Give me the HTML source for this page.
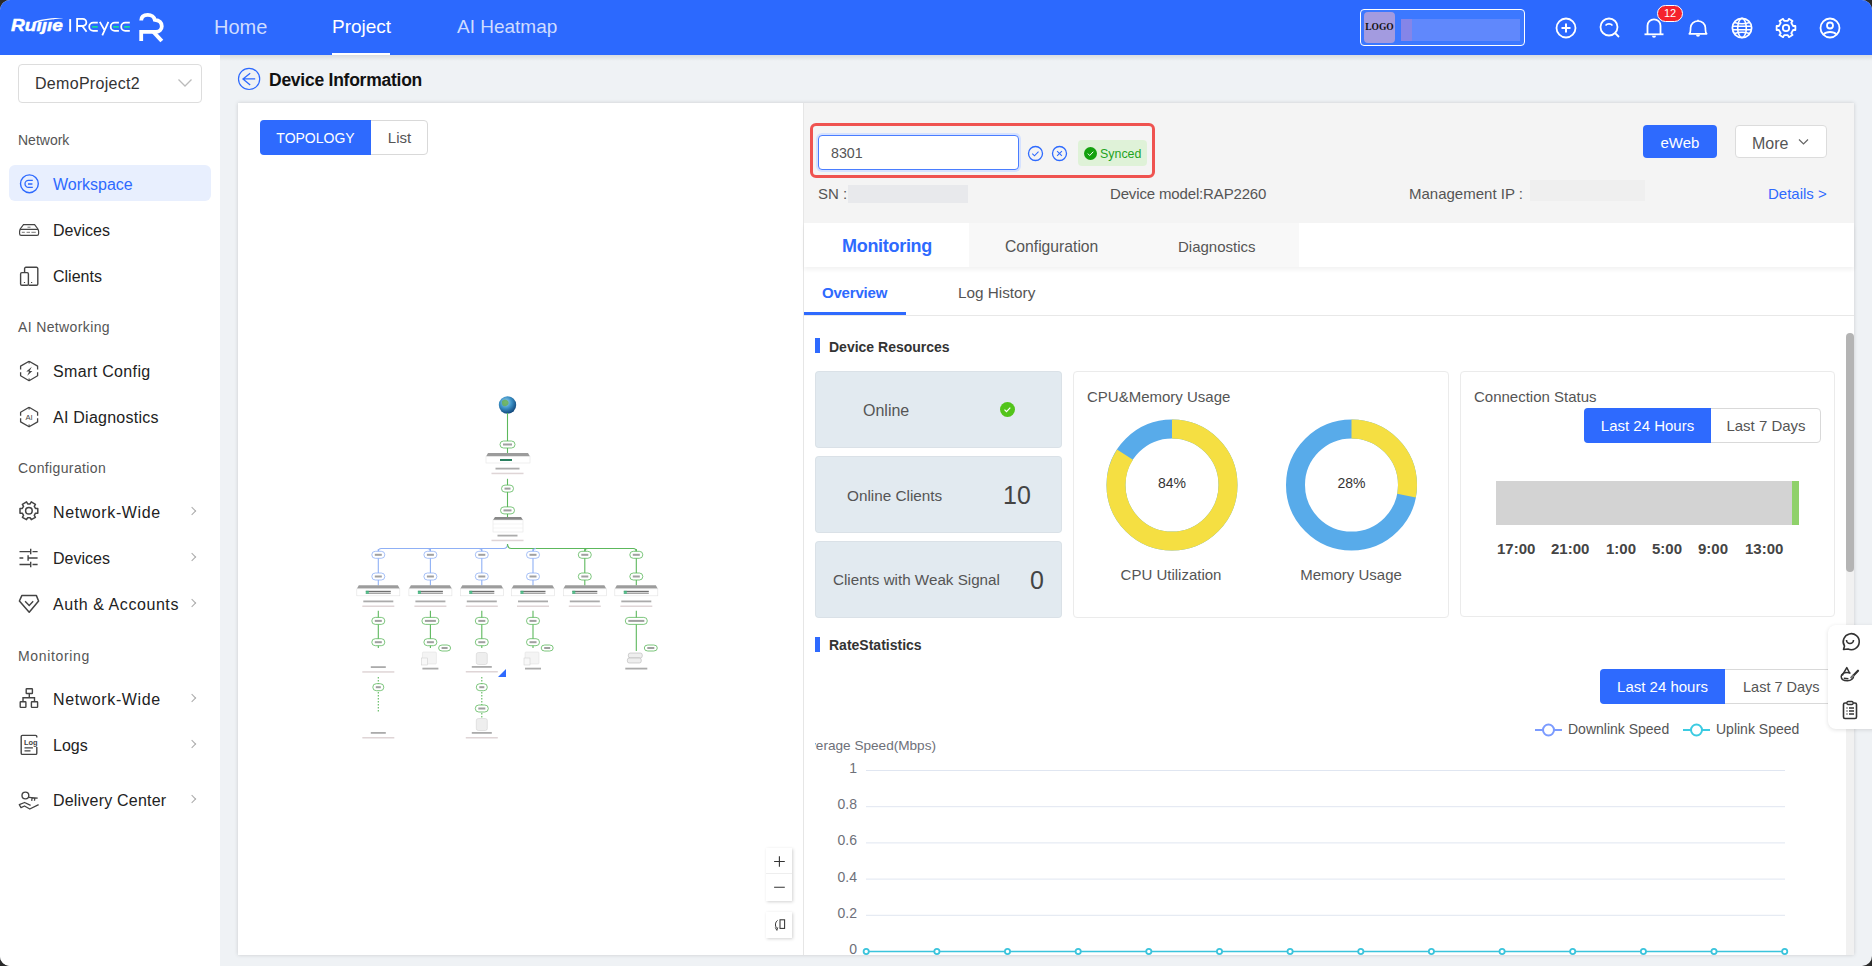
<!DOCTYPE html>
<html><head><meta charset="utf-8">
<style>
*{box-sizing:border-box;margin:0;padding:0}
html,body{width:1872px;height:966px;overflow:hidden;background:#2a2a2a}
body{font-family:"Liberation Sans",sans-serif;color:#333}
#win{position:absolute;left:0;top:0;width:1872px;height:966px;background:#eff2f5;border-radius:10px;overflow:hidden}
.a{position:absolute;white-space:nowrap}
svg.a{overflow:visible}
#hdr{position:absolute;left:0;top:0;width:1872px;height:55px;background:#2c69fe;z-index:2}
#side{position:absolute;left:0;top:55px;width:220px;height:911px;background:#fff}
.nav{color:#fff;font-size:20px;top:15px}
.grp{font-size:14px;color:#555;left:18px}
.item{font-size:16px;color:#222;left:53px}
.chev{position:absolute;left:189px;width:6px;height:6px;border-right:1px solid #aaa;border-top:1px solid #aaa;transform:rotate(45deg)}
.si{position:absolute;left:18px;width:22px;height:22px;overflow:visible}
#card{position:absolute;left:238px;top:103px;width:1616px;height:852px;background:#fff;box-shadow:0 0 4px rgba(0,0,0,.16)}
.hi{position:absolute;top:17px;width:22px;height:22px;overflow:visible}
</style></head>
<body><div id="win">
<!-- HEADER -->
<div id="hdr">
  <svg class="a" style="left:0;top:0" width="180" height="55" viewBox="0 0 180 55">
    <text x="11" y="31" font-family="Liberation Sans" font-size="17" font-weight="bold" font-style="italic" fill="#fff" stroke="#fff" stroke-width=".45" textLength="52" lengthAdjust="spacingAndGlyphs">Ruijie</text>
    <rect x="31" y="14" width="22" height="7.6" fill="#2c69fe"/><path d="M33 22.4C40 19.2 52 17.6 63.5 18.2C53 18.9 42 20.5 35 23z" fill="#fff"/>
    <rect x="69.2" y="19.1" width="1.9" height="12.7" fill="#fff"/>
    <path d="M77.1 31.8V18.9H82.8A3.55 3.55 0 0 1 82.8 26H77.1M82.3 26L86.6 31.8" stroke="#fff" stroke-width="1.8" fill="none"/><path d="M97.8 22.7H93.30A4.10 4.10 0 0 0 93.30 30.9H97.8" stroke="#fff" stroke-width="1.8" fill="none"/><path d="M92.2 26.8H97.8" stroke="#14d99b" stroke-width="1.8"/><path d="M99.8 21.9L104.2 29.6M108.4 21.9L102.3 35.3" stroke="#fff" stroke-width="1.8" fill="none"/><path d="M118.9 22.7H114.80A4.10 4.10 0 0 0 114.80 30.9H118.9" stroke="#fff" stroke-width="1.8" fill="none"/><path d="M113.2 26.8H118.9" stroke="#14d99b" stroke-width="1.8"/><path d="M129.8 22.7H125.30A4.10 4.10 0 0 0 125.30 30.9H129.8" stroke="#fff" stroke-width="1.8" fill="none"/><path d="M124.2 26.8H129.8" stroke="#14d99b" stroke-width="1.8"/>
    <path d="M141.2 20.5C141.2 16 144.5 14.8 147.8 14.8C151.5 14.8 154.2 17 154.8 19.8C159.5 20.2 161.8 23 161.8 26.2C161.8 29.8 159 31.8 156 31.8H141.2V41" fill="none" stroke="#fff" stroke-width="3.8"/><path d="M153.5 32L161.8 41" stroke="#fff" stroke-width="4"/>
  </svg>
  <div class="a nav" style="left:214px;top:16px;color:#cfdcff">Home</div>
  <div class="a nav" style="left:332px;top:16px;font-size:19px">Project</div>
  <div class="a" style="left:332px;top:53px;width:58px;height:2px;background:#fff"></div>
  <div class="a nav" style="left:457px;top:16px;font-size:19px;color:#cfdcff">AI Heatmap</div>
  <!-- logo box -->
  <div class="a" style="left:1360px;top:9px;width:165px;height:37px;border:1.5px solid #fff;border-radius:4px;background:#3c78ff"></div>
  <div class="a" style="left:1364px;top:12px;width:31px;height:31px;background:#a39be0;border-radius:4px;font-family:'Liberation Serif',serif;font-weight:bold;font-size:9.5px;color:#111;text-align:center;line-height:31px">LOGO</div>
  <div class="a" style="left:1401px;top:19px;width:119px;height:22px;background:#6088fc"></div>
  <div class="a" style="left:1401px;top:19px;width:11px;height:22px;background:#8585e8"></div>
  <!-- icons -->
  <svg class="hi" style="left:1555px" viewBox="0 0 22 22"><circle cx="11" cy="11" r="9.5" fill="none" stroke="#fff" stroke-width="1.8"/><path d="M11 6.5v9M6.5 11h9" stroke="#fff" stroke-width="2"/></svg>
  <svg class="hi" style="left:1599px" viewBox="0 0 22 22"><circle cx="10" cy="10" r="8.5" fill="none" stroke="#fff" stroke-width="1.8"/><path d="M16 16l4 4" stroke="#fff" stroke-width="1.8"/><path d="M6.5 8.5a4.5 4.5 0 0 1 7 0" fill="none" stroke="#fff" stroke-width="1.6"/></svg>
  <svg class="hi" style="left:1643px" viewBox="0 0 22 22"><path d="M4.5 17V8.8a6.5 6.5 0 0 1 13 0V17" fill="none" stroke="#fff" stroke-width="1.8"/><path d="M1.5 17.3h19" stroke="#fff" stroke-width="1.8"/><path d="M9 18.8a2 2 0 0 0 4 0" fill="#fff"/></svg>
  <svg class="hi" style="left:1687px" viewBox="0 0 22 22"><path d="M2.3 16.8C3.8 15.5 3.5 13.5 3.6 10.8C3.8 6.8 7 4 11 4S18.2 6.8 18.4 10.8C18.5 13.5 18.2 15.5 19.7 16.8z" fill="none" stroke="#fff" stroke-width="1.7" stroke-linejoin="round"/><path d="M9.7 4.2L11 2.3L12.3 4.2z" fill="#fff"/><path d="M9 17.8a2 2 0 0 0 4 0" fill="#fff"/></svg>
  <svg class="hi" style="left:1731px" viewBox="0 0 22 22"><circle cx="11" cy="11" r="9.6" fill="none" stroke="#fff" stroke-width="1.8"/><ellipse cx="11" cy="11" rx="4.3" ry="9.6" fill="none" stroke="#fff" stroke-width="1.6"/><path d="M1.5 9.2h19M1.5 12.8h19M3.5 5.5q7.5 2.5 15 0M3.5 16.5q7.5-2.5 15 0" fill="none" stroke="#fff" stroke-width="1.5"/></svg>
  <svg class="hi" style="left:1775px" viewBox="0 0 22 22"><path d="M18.12 8.99L20.37 8.91L20.37 13.09L18.12 13.01L16.30 16.16L17.50 18.07L13.87 20.16L12.82 18.17L9.18 18.17L8.13 20.160L4.50 18.07L5.70 16.16L3.88 13.01L1.63 13.09L1.63 8.91L3.88 8.99L5.70 5.84L4.50 3.93L8.13 1.84L9.18 3.83L12.82 3.83L13.87 1.84L17.50 3.93L16.30 5.84z" fill="none" stroke="#fff" stroke-width="1.8" stroke-linejoin="round"/><circle cx="11" cy="11" r="3.2" fill="none" stroke="#fff" stroke-width="1.8"/></svg>
  <svg class="hi" style="left:1819px" viewBox="0 0 22 22"><circle cx="11" cy="11" r="9.5" fill="none" stroke="#fff" stroke-width="1.8"/><circle cx="11" cy="8.5" r="3" fill="none" stroke="#fff" stroke-width="1.8"/><path d="M4.5 17.5a7.5 5 0 0 1 13 0" fill="none" stroke="#fff" stroke-width="1.8"/></svg>
  <div class="a" style="left:1657px;top:5px;width:26px;height:17px;background:#f5222d;border-radius:9px;border:1px solid #fff;color:#fff;font-size:11px;text-align:center;line-height:15px">12</div>
</div>
<!-- SIDEBAR -->
<div id="side">
  <div class="a" style="left:18px;top:9px;width:184px;height:39px;border:1px solid #ddd;border-radius:4px"></div>
  <div class="a" style="left:35px;top:20px;font-size:16px;color:#333;letter-spacing:.3px">DemoProject2</div>
  <svg class="a" style="left:176px;top:22px" width="18" height="12"><path d="M2.5 2.5L9 9L15.5 2.5" fill="none" stroke="#bbb" stroke-width="1.3"/></svg>
  <div class="grp a" style="top:77px">Network</div>
  <div class="a" style="left:9px;top:110px;width:202px;height:36px;background:#e8effe;border-radius:6px"></div>
  <div class="item a" style="top:121px;color:#2e6afe">Workspace</div>
  <div class="item a" style="top:167px">Devices</div>
  <div class="item a" style="top:213px">Clients</div>
  <div class="grp a" style="top:264px;letter-spacing:.37px">AI Networking</div>
  <div class="item a" style="top:308px;letter-spacing:.35px">Smart Config</div>
  <div class="item a" style="top:354px;letter-spacing:.25px">AI Diagnostics</div>
  <div class="grp a" style="top:405px;letter-spacing:.37px">Configuration</div>
  <div class="item a" style="top:449px;letter-spacing:.6px">Network-Wide</div>
  <div class="item a" style="top:495px">Devices</div>
  <div class="item a" style="top:541px;letter-spacing:.57px">Auth &amp; Accounts</div>
  <div class="grp a" style="top:593px;letter-spacing:.65px">Monitoring</div>
  <div class="item a" style="top:636px;letter-spacing:.6px">Network-Wide</div>
  <div class="item a" style="top:682px">Logs</div>
  <div class="item a" style="top:737px;letter-spacing:.2px">Delivery Center</div>
  <div class="chev" style="top:453px"></div>
  <div class="chev" style="top:499px"></div>
  <div class="chev" style="top:545px"></div>
  <div class="chev" style="top:640px"></div>
  <div class="chev" style="top:686px"></div>
  <div class="chev" style="top:741px"></div>
  <!-- icons -->
  <svg class="a" style="left:16px;top:116px" width="26" height="24" viewBox="16 171 26 24"><circle cx="29.4" cy="183.8" r="8.9" fill="none" stroke="#2e6afe" stroke-width="1.4"/><path d="M32.8 180.4H28.5a3.5 3.5 0 0 0 0 7H32.8" fill="none" stroke="#2e6afe" stroke-width="1.3"/><path d="M28 184H32.4" stroke="#2e6afe" stroke-width="1.6"/></svg>
  <svg class="a" style="left:16px;top:162px" width="26" height="24" viewBox="16 217 26 24"><path d="M19.8 229.5L23.5 224.6H34.6L38.3 229.5" fill="none" stroke="#444" stroke-width="1.2"/><rect x="19.6" y="229.3" width="19" height="6" rx="1.6" fill="none" stroke="#444" stroke-width="1.2"/><path d="M21.8 232.3h3M26.6 232.3h3.4M31.4 232.3h4.4M27.5 227.2h3" stroke="#666" stroke-width=".9"/></svg>
  <svg class="a" style="left:16px;top:208px" width="26" height="24" viewBox="16 263 26 24"><path d="M24.6 272.3V268.6a1.3 1.3 0 0 1 1.3-1.3H36.5a1.3 1.3 0 0 1 1.3 1.3V284a1.3 1.3 0 0 1-1.3 1.3H28.6" fill="none" stroke="#444" stroke-width="1.4"/><rect x="20.6" y="272.6" width="7.8" height="12.6" rx="1.3" fill="none" stroke="#444" stroke-width="1.4"/><path d="M23.9 282.5h1.2M31 282.5h1.2" stroke="#444" stroke-width="1.1"/></svg>
  <svg class="a" style="left:16px;top:303px" width="26" height="24" viewBox="16 358 26 24"><path d="M29.1 361.2L37.6 366.1V369.6M37.6 372.2V375.8L29.1 380.7L20.6 375.8V372.2M20.6 369.6V366.1L29.1 361.2" fill="none" stroke="#444" stroke-width="1.3" stroke-linejoin="round"/><path d="M29.1 361.5v2M29.1 380.4v-2" stroke="#444" stroke-width="1.2"/><path d="M31.8 366.8L26.3 371.6H29.2L27.2 375.8L32.4 370.9H29.6z" fill="#444"/></svg>
  <svg class="a" style="left:16px;top:349px" width="26" height="24" viewBox="16 404 26 24"><path d="M29.1 407.3L37.6 412.2V415.7M37.6 418.3V421.9L29.1 426.8L20.6 421.9V418.3M20.6 415.7V412.2L29.1 407.3" fill="none" stroke="#444" stroke-width="1.3" stroke-linejoin="round"/><path d="M29.1 407.6v2M29.1 426.5v-2" stroke="#444" stroke-width="1.2"/><text x="29.1" y="420" font-size="7.6" text-anchor="middle" font-family="Liberation Sans" fill="#444">AI</text></svg>
  <svg class="a" style="left:16px;top:444px" width="26" height="24" viewBox="16 499 26 24"><path d="M35.47 508.38L37.79 508.42L37.79 513.18L35.47 513.22L34.28 515.28L35.41 517.31L31.28 519.69L30.09 517.70L27.71 517.70L26.52 519.69L22.39 517.31L23.52 515.28L22.33 513.22L20.01 513.18L20.01 508.42L22.33 508.38L23.52 506.32L22.39 504.29L26.52 501.91L27.71 503.90L30.09 503.90L31.28 501.91L35.41 504.29L34.28 506.32z" fill="none" stroke="#444" stroke-width="1.5" stroke-linejoin="round"/><circle cx="28.9" cy="510.8" r="3.3" fill="none" stroke="#444" stroke-width="1.5"/></svg>
  <svg class="a" style="left:16px;top:490px" width="26" height="24" viewBox="16 545 26 24"><path d="M19.5 551.6H30M32.5 551.6H37.6M19.5 558H23.3M28 558H37.6M19.5 564.5H30M32.5 564.5H37.6" stroke="#444" stroke-width="1.4"/><path d="M30.7 548.8V554.3M28.1 555.2V560.8M30.7 561.7V567.2" stroke="#444" stroke-width="1.4"/></svg>
  <svg class="a" style="left:16px;top:536px" width="26" height="24" viewBox="16 591 26 24"><path d="M21.8 595.6H36.4L38.6 601L29.2 612.2L19.4 601z" fill="none" stroke="#444" stroke-width="1.5" stroke-linejoin="round"/><path d="M25.1 601.2L29.2 605.4L33.2 601.2" fill="none" stroke="#444" stroke-width="1.4"/></svg>
  <svg class="a" style="left:16px;top:630px" width="26" height="24" viewBox="16 685 26 24"><rect x="26.2" y="688.7" width="6.2" height="4.8" rx=".6" fill="none" stroke="#444" stroke-width="1.4"/><rect x="20.2" y="701.8" width="5.7" height="5.6" rx=".6" fill="none" stroke="#444" stroke-width="1.4"/><rect x="31.4" y="701.8" width="6.2" height="5.6" rx=".6" fill="none" stroke="#444" stroke-width="1.4"/><path d="M29.3 693.5V697.7M23 701.8V697.7H34.5V701.8" fill="none" stroke="#444" stroke-width="1.4"/></svg>
  <svg class="a" style="left:16px;top:677px" width="26" height="24" viewBox="16 732 26 24"><path d="M36.8 737.6V736.6a1.2 1.2 0 0 0-1.2-1.2H22.4a1.2 1.2 0 0 0-1.2 1.2V753.2a1.2 1.2 0 0 0 1.2 1.2H35.6a1.2 1.2 0 0 0 1.2-1.2V747" fill="none" stroke="#444" stroke-width="1.4"/><text x="24" y="745.3" font-size="7.8" font-family="Liberation Sans" font-weight="bold" fill="#444" textLength="13.6" lengthAdjust="spacingAndGlyphs">Log</text><path d="M24.5 747.8H32.9M24.5 750.8H30.5" stroke="#444" stroke-width="1.2"/></svg>
  <svg class="a" style="left:16px;top:733px" width="26" height="24" viewBox="16 788 26 24"><circle cx="25.4" cy="795.5" r="3.4" fill="none" stroke="#444" stroke-width="1.4"/><path d="M28.8 797.3L37.7 798.2M32.1 797.7L31.7 800.8M34.8 797.9L34.5 800.8" fill="none" stroke="#444" stroke-width="1.3"/><path d="M30.6 805.3L24.6 802.5L19.3 804.6L21 807.7L24.5 806L29.8 809L38.6 804.6" fill="none" stroke="#444" stroke-width="1.3" stroke-linejoin="round"/></svg>
</div>
<div class="a" style="left:220px;top:55px;width:1652px;height:6px;background:linear-gradient(rgba(0,0,0,.09),rgba(0,0,0,0))"></div>
<!-- PAGE TITLE -->
<svg class="a" style="left:236px;top:66px" width="26" height="26" viewBox="236 66 26 26"><circle cx="249.1" cy="78.9" r="10.6" fill="none" stroke="#2e6afe" stroke-width="1.2"/><path d="M255.2 78.9H243M250.2 73.2L243 78.9L250.2 84.9" fill="none" stroke="#2e6afe" stroke-width="1.3"/></svg>
<div class="a" style="left:269px;top:70px;font-size:17.5px;font-weight:bold;color:#111;letter-spacing:-.25px">Device Information</div>

<!-- CARD -->
<div id="card"></div>
<div class="a" style="left:803px;top:103px;width:1px;height:852px;background:#e6e6e6"></div>
<!-- topology toggle -->
<div class="a" style="left:260px;top:120px;width:168px;height:35px;border:1px solid #d9d9d9;border-radius:4px;background:#fff"></div>
<div class="a" style="left:260px;top:120px;width:111px;height:35px;background:#2e6afe;border-radius:4px 0 0 4px;color:#fff;font-size:14px;line-height:36px;text-align:center">TOPOLOGY</div>
<div class="a" style="left:371px;top:120px;width:57px;height:35px;color:#555;font-size:15px;line-height:36px;text-align:center">List</div>
<!-- topology -->
<svg class="a" style="left:340px;top:385px" width="340" height="370"><defs><radialGradient id="gl" cx=".4" cy=".35" r=".7"><stop offset="0" stop-color="#9fd6f2"/><stop offset=".5" stop-color="#3a8fc4"/><stop offset="1" stop-color="#0d3f73"/></radialGradient></defs><circle cx="167.5" cy="20" r="8.7" fill="url(#gl)"/><path d="M162 16q3 -3 6 0q2 3 -2 5q-3 1 -4 -2z" fill="#6ab04c" opacity=".8"/><path d="M167.5 28L167.5 68" stroke="#5cb85c" stroke-width="1.1" fill="none"/><rect x="160.0" y="56.0" width="15" height="7" rx="3.5" fill="#fff" stroke="#5cb85c" stroke-width=".8"/><rect x="163.0" y="58.5" width="9" height="2" fill="#777" opacity=".7"/><path d="M148 68H188L190 71.5H146z" fill="#9c9c9c"/><rect x="146" y="71.5" width="44" height="6.5" fill="#fff" stroke="#e5e5e5" stroke-width=".6"/><rect x="160" y="74" width="12" height="2" fill="#2a7f5f"/><rect x="155.5" y="82.7" width="24" height="1.8" fill="#666" opacity=".55"/><rect x="151.5" y="87.7" width="32" height="1.5" fill="#c9b9bb" opacity=".6"/><path d="M167.5 93.8L167.5 132" stroke="#5cb85c" stroke-width="1.1" fill="none"/><rect x="161.5" y="100.1" width="12" height="7" rx="3.5" fill="#fff" stroke="#5cb85c" stroke-width=".8"/><rect x="164.5" y="102.6" width="6" height="2" fill="#777" opacity=".7"/><rect x="160.5" y="121.9" width="14" height="7" rx="3.5" fill="#fff" stroke="#5cb85c" stroke-width=".8"/><rect x="163.5" y="124.4" width="8" height="2" fill="#777" opacity=".7"/><path d="M155 132H181L183 135H153z" fill="#888"/><rect x="153" y="135" width="30" height="12" fill="#fff" stroke="#e5e5e5" stroke-width=".6"/><path d="M153 139h30M153 143h30" stroke="#eee" stroke-width=".6"/><rect x="157.5" y="149.7" width="20" height="1.8" fill="#666" opacity=".55"/><rect x="151.5" y="154.7" width="32" height="1.5" fill="#c9b9bb" opacity=".6"/><path d="M167.5 159q0 4.5 -4 4.5H41.3q-3 0 -3 3" stroke="#8fb0f5" stroke-width="1.1" fill="none"/><path d="M167.5 159q0 4.5 4 4.5H293.3q3 0 3 3" stroke="#5cb85c" stroke-width="1.1" fill="none"/><path d="M38.3 164L38.3 200.4" stroke="#8fb0f5" stroke-width="1.1" fill="none"/><rect x="31.8" y="166.3" width="13" height="7" rx="3.5" fill="#fff" stroke="#8fb0f5" stroke-width=".8"/><rect x="34.8" y="168.8" width="7" height="2" fill="#777" opacity=".7"/><rect x="31.8" y="188.0" width="13" height="7" rx="3.5" fill="#fff" stroke="#8fb0f5" stroke-width=".8"/><rect x="34.8" y="190.5" width="7" height="2" fill="#777" opacity=".7"/><path d="M18.8 200.3H57.8L59.8 203.8H16.8z" fill="#9c9c9c"/><rect x="16.8" y="203.8" width="43" height="7" fill="#fff" stroke="#e2e2e2" stroke-width=".6"/><rect x="25.8" y="205.79999999999998" width="25.0" height="1.2" fill="#333" opacity=".7"/><rect x="25.8" y="207.6" width="25.0" height="1.2" fill="#333" opacity=".55"/><rect x="25.8" y="205.79999999999998" width="3" height="3" fill="#3cbf7f" opacity=".8"/><rect x="23.3" y="215.5" width="30" height="1.8" fill="#666" opacity=".55"/><rect x="22.3" y="220.5" width="32" height="1.5" fill="#c9b9bb" opacity=".6"/><path d="M90.4 166.5q0 -3 -3 -3" stroke="#8fb0f5" stroke-width="1.1" fill="none"/><path d="M90.4 164L90.4 200.4" stroke="#8fb0f5" stroke-width="1.1" fill="none"/><rect x="83.9" y="166.3" width="13" height="7" rx="3.5" fill="#fff" stroke="#8fb0f5" stroke-width=".8"/><rect x="86.9" y="168.8" width="7" height="2" fill="#777" opacity=".7"/><rect x="83.9" y="188.0" width="13" height="7" rx="3.5" fill="#fff" stroke="#8fb0f5" stroke-width=".8"/><rect x="86.9" y="190.5" width="7" height="2" fill="#777" opacity=".7"/><path d="M70.9 200.3H109.9L111.9 203.8H68.9z" fill="#9c9c9c"/><rect x="68.9" y="203.8" width="43" height="7" fill="#fff" stroke="#e2e2e2" stroke-width=".6"/><rect x="77.9" y="205.79999999999998" width="25.0" height="1.2" fill="#333" opacity=".7"/><rect x="77.9" y="207.6" width="25.0" height="1.2" fill="#333" opacity=".55"/><rect x="77.9" y="205.79999999999998" width="3" height="3" fill="#3cbf7f" opacity=".8"/><rect x="75.4" y="215.5" width="30" height="1.8" fill="#666" opacity=".55"/><rect x="74.4" y="220.5" width="32" height="1.5" fill="#c9b9bb" opacity=".6"/><path d="M141.8 166.5q0 -3 -3 -3" stroke="#8fb0f5" stroke-width="1.1" fill="none"/><path d="M141.8 164L141.8 200.4" stroke="#8fb0f5" stroke-width="1.1" fill="none"/><rect x="135.3" y="166.3" width="13" height="7" rx="3.5" fill="#fff" stroke="#8fb0f5" stroke-width=".8"/><rect x="138.3" y="168.8" width="7" height="2" fill="#777" opacity=".7"/><rect x="135.3" y="188.0" width="13" height="7" rx="3.5" fill="#fff" stroke="#8fb0f5" stroke-width=".8"/><rect x="138.3" y="190.5" width="7" height="2" fill="#777" opacity=".7"/><path d="M122.3 200.3H161.3L163.3 203.8H120.3z" fill="#9c9c9c"/><rect x="120.3" y="203.8" width="43" height="7" fill="#fff" stroke="#e2e2e2" stroke-width=".6"/><rect x="129.3" y="205.79999999999998" width="25.0" height="1.2" fill="#333" opacity=".7"/><rect x="129.3" y="207.6" width="25.0" height="1.2" fill="#333" opacity=".55"/><rect x="129.3" y="205.79999999999998" width="3" height="3" fill="#3cbf7f" opacity=".8"/><rect x="126.8" y="215.5" width="30" height="1.8" fill="#666" opacity=".55"/><rect x="125.8" y="220.5" width="32" height="1.5" fill="#c9b9bb" opacity=".6"/><path d="M193 166.5q0 -3 3 -3" stroke="#8fb0f5" stroke-width="1.1" fill="none"/><path d="M193 164L193 200.4" stroke="#8fb0f5" stroke-width="1.1" fill="none"/><rect x="186.5" y="166.3" width="13" height="7" rx="3.5" fill="#fff" stroke="#8fb0f5" stroke-width=".8"/><rect x="189.5" y="168.8" width="7" height="2" fill="#777" opacity=".7"/><rect x="186.5" y="188.0" width="13" height="7" rx="3.5" fill="#fff" stroke="#8fb0f5" stroke-width=".8"/><rect x="189.5" y="190.5" width="7" height="2" fill="#777" opacity=".7"/><path d="M173.5 200.3H212.5L214.5 203.8H171.5z" fill="#9c9c9c"/><rect x="171.5" y="203.8" width="43" height="7" fill="#fff" stroke="#e2e2e2" stroke-width=".6"/><rect x="180.5" y="205.79999999999998" width="25.0" height="1.2" fill="#333" opacity=".7"/><rect x="180.5" y="207.6" width="25.0" height="1.2" fill="#333" opacity=".55"/><rect x="180.5" y="205.79999999999998" width="3" height="3" fill="#3cbf7f" opacity=".8"/><rect x="178.0" y="215.5" width="30" height="1.8" fill="#666" opacity=".55"/><rect x="177.0" y="220.5" width="32" height="1.5" fill="#c9b9bb" opacity=".6"/><path d="M244.8 166.5q0 -3 3 -3" stroke="#5cb85c" stroke-width="1.1" fill="none"/><path d="M244.8 164L244.8 200.4" stroke="#5cb85c" stroke-width="1.1" fill="none"/><rect x="238.3" y="166.3" width="13" height="7" rx="3.5" fill="#fff" stroke="#5cb85c" stroke-width=".8"/><rect x="241.3" y="168.8" width="7" height="2" fill="#777" opacity=".7"/><rect x="238.3" y="188.0" width="13" height="7" rx="3.5" fill="#fff" stroke="#5cb85c" stroke-width=".8"/><rect x="241.3" y="190.5" width="7" height="2" fill="#777" opacity=".7"/><path d="M225.3 200.3H264.3L266.3 203.8H223.3z" fill="#9c9c9c"/><rect x="223.3" y="203.8" width="43" height="7" fill="#fff" stroke="#e2e2e2" stroke-width=".6"/><rect x="232.3" y="205.79999999999998" width="25.0" height="1.2" fill="#333" opacity=".7"/><rect x="232.3" y="207.6" width="25.0" height="1.2" fill="#333" opacity=".55"/><rect x="232.3" y="205.79999999999998" width="3" height="3" fill="#3cbf7f" opacity=".8"/><rect x="229.8" y="215.5" width="30" height="1.8" fill="#666" opacity=".55"/><rect x="228.8" y="220.5" width="32" height="1.5" fill="#c9b9bb" opacity=".6"/><path d="M296.3 164L296.3 200.4" stroke="#5cb85c" stroke-width="1.1" fill="none"/><rect x="289.8" y="166.3" width="13" height="7" rx="3.5" fill="#fff" stroke="#5cb85c" stroke-width=".8"/><rect x="292.8" y="168.8" width="7" height="2" fill="#777" opacity=".7"/><rect x="289.8" y="188.0" width="13" height="7" rx="3.5" fill="#fff" stroke="#5cb85c" stroke-width=".8"/><rect x="292.8" y="190.5" width="7" height="2" fill="#777" opacity=".7"/><path d="M276.8 200.3H315.8L317.8 203.8H274.8z" fill="#9c9c9c"/><rect x="274.8" y="203.8" width="43" height="7" fill="#fff" stroke="#e2e2e2" stroke-width=".6"/><rect x="283.8" y="205.79999999999998" width="25.0" height="1.2" fill="#333" opacity=".7"/><rect x="283.8" y="207.6" width="25.0" height="1.2" fill="#333" opacity=".55"/><rect x="283.8" y="205.79999999999998" width="3" height="3" fill="#3cbf7f" opacity=".8"/><rect x="281.3" y="215.5" width="30" height="1.8" fill="#666" opacity=".55"/><rect x="280.3" y="220.5" width="32" height="1.5" fill="#c9b9bb" opacity=".6"/><path d="M38.3 225.7L38.3 263" stroke="#5cb85c" stroke-width="1.1" fill="none"/><rect x="31.8" y="232.4" width="13" height="7" rx="3.5" fill="#fff" stroke="#5cb85c" stroke-width=".8"/><rect x="34.8" y="234.9" width="7" height="2" fill="#777" opacity=".7"/><rect x="31.8" y="253.7" width="13" height="7" rx="3.5" fill="#fff" stroke="#5cb85c" stroke-width=".8"/><rect x="34.8" y="256.2" width="7" height="2" fill="#777" opacity=".7"/><path d="M90.4 225.7L90.4 263" stroke="#5cb85c" stroke-width="1.1" fill="none"/><rect x="81.9" y="232.4" width="17" height="7" rx="3.5" fill="#fff" stroke="#5cb85c" stroke-width=".8"/><rect x="84.9" y="234.9" width="11" height="2" fill="#777" opacity=".7"/><rect x="83.9" y="253.7" width="13" height="7" rx="3.5" fill="#fff" stroke="#5cb85c" stroke-width=".8"/><rect x="86.9" y="256.2" width="7" height="2" fill="#777" opacity=".7"/><path d="M141.8 225.7L141.8 263" stroke="#5cb85c" stroke-width="1.1" fill="none"/><rect x="135.3" y="232.4" width="13" height="7" rx="3.5" fill="#fff" stroke="#5cb85c" stroke-width=".8"/><rect x="138.3" y="234.9" width="7" height="2" fill="#777" opacity=".7"/><rect x="135.3" y="253.7" width="13" height="7" rx="3.5" fill="#fff" stroke="#5cb85c" stroke-width=".8"/><rect x="138.3" y="256.2" width="7" height="2" fill="#777" opacity=".7"/><path d="M193 225.7L193 263" stroke="#5cb85c" stroke-width="1.1" fill="none"/><rect x="186.5" y="232.4" width="13" height="7" rx="3.5" fill="#fff" stroke="#5cb85c" stroke-width=".8"/><rect x="189.5" y="234.9" width="7" height="2" fill="#777" opacity=".7"/><rect x="186.5" y="253.7" width="13" height="7" rx="3.5" fill="#fff" stroke="#5cb85c" stroke-width=".8"/><rect x="189.5" y="256.2" width="7" height="2" fill="#777" opacity=".7"/><path d="M296.3 225.7L296.3 266" stroke="#5cb85c" stroke-width="1.1" fill="none"/><rect x="285.3" y="232.4" width="22" height="7" rx="3.5" fill="#fff" stroke="#5cb85c" stroke-width=".8"/><rect x="288.3" y="234.9" width="16" height="2" fill="#777" opacity=".7"/><rect x="30.8" y="281.2" width="15" height="1.8" fill="#666" opacity=".55"/><rect x="22.3" y="286.2" width="32" height="1.5" fill="#c9b9bb" opacity=".6"/><path d="M38.3 292L38.3 328" stroke="#5cb85c" stroke-width="1.1" stroke-dasharray="1.5 1.5" fill="none"/><rect x="32.8" y="298.7" width="11" height="7" rx="3.5" fill="#fff" stroke="#5cb85c" stroke-width=".8"/><rect x="35.8" y="301.2" width="5" height="2" fill="#777" opacity=".7"/><rect x="30.8" y="347" width="15" height="1.8" fill="#666" opacity=".55"/><rect x="22.3" y="352" width="32" height="1.5" fill="#c9b9bb" opacity=".6"/><rect x="82.4" y="267" width="14" height="12" rx="1" fill="#f4f4f4" stroke="#ddd" stroke-width=".5"/><rect x="81.4" y="273" width="6" height="7" fill="#f8f8f8" stroke="#ccc" stroke-width=".5"/><rect x="82.4" y="282.7" width="16" height="1.8" fill="#666" opacity=".55"/><rect x="98.6" y="260.0" width="12" height="6" rx="3.5" fill="#fff" stroke="#5cb85c" stroke-width=".8"/><rect x="101.6" y="262" width="6" height="2" fill="#777" opacity=".7"/><rect x="185" y="267" width="14" height="12" rx="1" fill="#f4f4f4" stroke="#ddd" stroke-width=".5"/><rect x="184" y="273" width="6" height="7" fill="#f8f8f8" stroke="#ccc" stroke-width=".5"/><rect x="185.0" y="282.7" width="16" height="1.8" fill="#666" opacity=".55"/><rect x="201.2" y="260.0" width="12" height="6" rx="3.5" fill="#fff" stroke="#5cb85c" stroke-width=".8"/><rect x="204.2" y="262" width="6" height="2" fill="#777" opacity=".7"/><rect x="136.3" y="267.5" width="11" height="12" rx="2" fill="#eee" stroke="#ccc" stroke-width=".5"/><rect x="131.8" y="281" width="20" height="1.8" fill="#666" opacity=".55"/><rect x="125.8" y="286" width="32" height="1.5" fill="#c9b9bb" opacity=".6"/><path d="M166 284V292H158z" fill="#2e6afe"/><path d="M141.8 292L141.8 333" stroke="#5cb85c" stroke-width="1.1" stroke-dasharray="1.5 1.5" fill="none"/><rect x="136.3" y="298.7" width="11" height="7" rx="3.5" fill="#fff" stroke="#5cb85c" stroke-width=".8"/><rect x="139.3" y="301.2" width="5" height="2" fill="#777" opacity=".7"/><rect x="135.3" y="320.0" width="13" height="7" rx="3.5" fill="#fff" stroke="#5cb85c" stroke-width=".8"/><rect x="138.3" y="322.5" width="7" height="2" fill="#777" opacity=".7"/><rect x="136.3" y="333.5" width="11" height="12" rx="2" fill="#eee" stroke="#ccc" stroke-width=".5"/><rect x="131.8" y="347" width="20" height="1.8" fill="#666" opacity=".55"/><rect x="125.8" y="352" width="32" height="1.5" fill="#c9b9bb" opacity=".6"/><rect x="288.3" y="268" width="14" height="5" rx="2" fill="#eee" stroke="#aaa" stroke-width=".5"/><rect x="287.3" y="273" width="14" height="5" rx="2" fill="#eee" stroke="#aaa" stroke-width=".5"/><rect x="285.3" y="282.7" width="22" height="1.8" fill="#666" opacity=".55"/><rect x="304.3" y="260.0" width="13" height="6" rx="3.5" fill="#fff" stroke="#5cb85c" stroke-width=".8"/><rect x="307.3" y="262" width="7" height="2" fill="#777" opacity=".7"/></svg>
<!-- zoom controls -->
<div class="a" style="left:766px;top:848px;width:26px;height:53px;background:#fff;box-shadow:1px 1px 3px rgba(0,0,0,.18)"></div>
<div class="a" style="left:766px;top:873px;width:26px;height:1px;background:#eee"></div>
<svg class="a" style="left:766px;top:848px" width="26" height="53" viewBox="766 848 26 53"><path d="M779.4 856.3V866.7M774.1 861.5H784.8M774.1 887.3H784.8" stroke="#333" stroke-width="1.1"/></svg>
<div class="a" style="left:766px;top:912px;width:26px;height:26px;background:#fff;box-shadow:1px 1px 3px rgba(0,0,0,.18)"></div>
<svg class="a" style="left:766px;top:912px" width="26" height="26" viewBox="766 912 26 26"><rect x="780" y="919.8" width="4.6" height="8.6" fill="none" stroke="#333" stroke-width="1.05"/><path d="M777.6 920.4C775.2 922 774.8 925.5 776.6 928.2" fill="none" stroke="#333" stroke-width="1"/><path d="M775.3 927.6L776.9 930.4L777.8 927.4" fill="none" stroke="#333" stroke-width=".9"/></svg>

<!-- RIGHT PANEL top gray -->
<div class="a" style="left:804px;top:103px;width:1050px;height:120px;background:#f4f4f4"></div>
<div class="a" style="left:810px;top:123px;width:345px;height:55px;border:3.5px solid #ef5350;border-radius:6px"></div>
<div class="a" style="left:818px;top:135px;width:201px;height:35px;background:#fff;border:1px solid #4a7dff;border-radius:4px;box-shadow:0 0 0 2px #d6e2ff"></div>
<div class="a" style="left:831px;top:144px;font-size:15.5px;color:#555;transform:scaleX(.92);transform-origin:0 0">8301</div>
<svg class="a" style="left:1027px;top:145px" width="17" height="17" viewBox="0 0 17 17"><circle cx="8.5" cy="8.5" r="7" fill="none" stroke="#2e6afe" stroke-width="1.3"/><path d="M5.3 8.6l2.2 2.2 4-4.2" fill="none" stroke="#2e6afe" stroke-width="1.05"/></svg>
<svg class="a" style="left:1051px;top:145px" width="17" height="17" viewBox="0 0 17 17"><circle cx="8.5" cy="8.5" r="7" fill="none" stroke="#2e6afe" stroke-width="1.3"/><path d="M6.1 6.1l4.8 4.8M10.9 6.1l-4.8 4.8" fill="none" stroke="#2e6afe" stroke-width="1.05"/></svg>
<div class="a" style="left:1078px;top:140px;width:69px;height:26px;background:#dff2d8;border-radius:4px"></div>
<svg class="a" style="left:1084px;top:147px" width="13" height="13" viewBox="0 0 13 13"><circle cx="6.5" cy="6.5" r="6.5" fill="#13a10e"/><path d="M3.8 6.6l1.9 1.9 3.6-3.8" fill="none" stroke="#fff" stroke-width="1"/></svg>
<div class="a" style="left:1100px;top:146px;font-size:13.5px;color:#1fa31f;transform:scaleX(.92);transform-origin:0 0">Synced</div>
<div class="a" style="left:1643px;top:125px;width:74px;height:33px;background:#2e6afe;border-radius:4px;color:#fff;font-size:15px;line-height:36px;text-align:center">eWeb</div>
<div class="a" style="left:1735px;top:125px;width:92px;height:33px;background:#fff;border:1px solid #dcdcdc;border-radius:4px"></div>
<div class="a" style="left:1752px;top:135px;font-size:16px;color:#555">More</div>
<svg class="a" style="left:1798px;top:138px" width="11" height="8"><path d="M1 1.5l4.5 4.5 4.5-4.5" fill="none" stroke="#666" stroke-width="1.2"/></svg>
<div class="a" style="left:818px;top:185px;font-size:15px;color:#555">SN :</div>
<div class="a" style="left:848px;top:185px;width:120px;height:18px;background:#e8e9ec"></div>
<div class="a" style="left:1110px;top:185px;font-size:15px;color:#555;letter-spacing:-.15px">Device model:RAP2260</div>
<div class="a" style="left:1409px;top:185px;font-size:15px;color:#555">Management IP :</div>
<div class="a" style="left:1530px;top:180px;width:115px;height:21px;background:#efefef"></div>
<div class="a" style="left:1768px;top:185px;font-size:15px;color:#2e6afe">Details &gt;</div>

<!-- tabs -->
<div class="a" style="left:804px;top:223px;width:1050px;height:44px;background:#fff;box-shadow:0 3px 4px rgba(0,0,0,.05)"></div>
<div class="a" style="left:969px;top:223px;width:330px;height:44px;background:#f8f8f8"></div>
<div class="a" style="left:842px;top:236px;font-size:18px;color:#2e6afe;font-weight:bold;letter-spacing:-.3px">Monitoring</div>
<div class="a" style="left:1005px;top:238px;font-size:15.7px;color:#555">Configuration</div>
<div class="a" style="left:1178px;top:238px;font-size:15px;color:#555">Diagnostics</div>
<div class="a" style="left:822px;top:284px;font-size:15px;color:#2e6afe;font-weight:bold;letter-spacing:-.2px">Overview</div>
<div class="a" style="left:958px;top:284px;font-size:15.3px;color:#555">Log History</div>
<div class="a" style="left:804px;top:315px;width:1050px;height:1px;background:#e8e8e8"></div>
<div class="a" style="left:804px;top:312px;width:102px;height:3px;background:#2e6afe"></div>
<!-- scrollbar -->
<div class="a" style="left:1846px;top:560px;width:8px;height:395px;background:#f1f1f1"></div>
<div class="a" style="left:1846px;top:333px;width:8px;height:239px;background:#b4b4b4;border-radius:4px 4px 4px 4px"></div>

<!-- Device Resources -->
<div class="a" style="left:815px;top:338px;width:5px;height:15px;background:#2e6afe"></div>
<div class="a" style="left:829px;top:339px;font-size:14px;font-weight:bold;color:#333">Device Resources</div>
<div class="a" style="left:815px;top:371px;width:247px;height:77px;background:#e2eaf0;border-radius:4px;box-shadow:inset 0 0 0 1px rgba(0,0,0,.035)"></div>
<div class="a" style="left:815px;top:456px;width:247px;height:77px;background:#e2eaf0;border-radius:4px;box-shadow:inset 0 0 0 1px rgba(0,0,0,.035)"></div>
<div class="a" style="left:815px;top:541px;width:247px;height:77px;background:#e2eaf0;border-radius:4px;box-shadow:inset 0 0 0 1px rgba(0,0,0,.035)"></div>
<div class="a" style="left:863px;top:402px;font-size:16px;color:#555">Online</div>
<svg class="a" style="left:1000px;top:402px" width="15" height="15" viewBox="0 0 15 15"><circle cx="7.5" cy="7.5" r="7.5" fill="#52c41a"/><path d="M4.5 7.6l2 2 3.8-4" fill="none" stroke="#fff" stroke-width="1.2"/></svg>
<div class="a" style="left:847px;top:487px;font-size:15.3px;color:#555">Online Clients</div>
<div class="a" style="left:1003px;top:481px;font-size:25px;color:#444">10</div>
<div class="a" style="left:833px;top:571px;font-size:15.2px;color:#555">Clients with Weak Signal</div>
<div class="a" style="left:1030px;top:566px;font-size:25px;color:#444">0</div>

<!-- CPU card -->
<div class="a" style="left:1073px;top:371px;width:376px;height:247px;border:1px solid #ebebeb;border-radius:4px"></div>
<div class="a" style="left:1087px;top:388px;font-size:15px;color:#555">CPU&amp;Memory Usage</div>
<svg class="a" style="left:1073px;top:371px" width="376" height="247">
  <g transform="translate(99,114)">
    <circle r="56" fill="none" stroke="#58abea" stroke-width="19"/>
    <circle r="56" fill="none" stroke="#f5df42" stroke-width="19" stroke-dasharray="295.56 400" transform="rotate(-90)"/>
  </g>
  <g transform="translate(278.5,114)">
    <circle r="56" fill="none" stroke="#58abea" stroke-width="19"/>
    <circle r="56" fill="none" stroke="#f5df42" stroke-width="19" stroke-dasharray="98.52 400" transform="rotate(-90)"/>
  </g>
  <text x="99" y="117" font-size="14" text-anchor="middle" fill="#333" font-family="Liberation Sans">84%</text>
  <text x="278.5" y="117" font-size="14" text-anchor="middle" fill="#333" font-family="Liberation Sans">28%</text>
  <text x="98" y="209" font-size="15" text-anchor="middle" fill="#555" font-family="Liberation Sans">CPU Utilization</text>
  <text x="278" y="209" font-size="15" text-anchor="middle" fill="#555" font-family="Liberation Sans">Memory Usage</text>
</svg>

<!-- Connection card -->
<div class="a" style="left:1460px;top:371px;width:375px;height:246px;border:1px solid #ebebeb;border-radius:4px"></div>
<div class="a" style="left:1474px;top:388px;font-size:15px;color:#555">Connection Status</div>
<div class="a" style="left:1584px;top:408px;width:237px;height:35px;border:1px solid #d9d9d9;border-radius:4px"></div>
<div class="a" style="left:1584px;top:408px;width:127px;height:35px;background:#2e6afe;border-radius:4px 0 0 4px;color:#fff;font-size:15px;line-height:35px;text-align:center">Last 24 Hours</div>
<div class="a" style="left:1711px;top:408px;width:110px;height:35px;color:#555;font-size:15px;line-height:35px;text-align:center">Last 7 Days</div>
<div class="a" style="left:1496px;top:481px;width:297px;height:44px;background:#d3d3d3"></div>
<div class="a" style="left:1792px;top:481px;width:7px;height:44px;background:#8fd16a"></div>
<div class="a" style="left:1497px;top:540px;font-size:15px;font-weight:bold;color:#444">17:00</div>
<div class="a" style="left:1551px;top:540px;font-size:15px;font-weight:bold;color:#444">21:00</div>
<div class="a" style="left:1606px;top:540px;font-size:15px;font-weight:bold;color:#444">1:00</div>
<div class="a" style="left:1652px;top:540px;font-size:15px;font-weight:bold;color:#444">5:00</div>
<div class="a" style="left:1698px;top:540px;font-size:15px;font-weight:bold;color:#444">9:00</div>
<div class="a" style="left:1745px;top:540px;font-size:15px;font-weight:bold;color:#444">13:00</div>

<!-- RateStatistics -->
<div class="a" style="left:815px;top:637px;width:5px;height:15px;background:#2e6afe"></div>
<div class="a" style="left:829px;top:637px;font-size:14px;font-weight:bold;color:#333">RateStatistics</div>
<div class="a" style="left:1600px;top:669px;width:240px;height:35px;border:1px solid #d9d9d9;border-radius:4px"></div>
<div class="a" style="left:1600px;top:669px;width:125px;height:35px;background:#2e6afe;border-radius:4px 0 0 4px;color:#fff;font-size:15px;line-height:35px;text-align:center">Last 24 hours</div>
<div class="a" style="left:1743px;top:669px;font-size:14.5px;line-height:36px;color:#555">Last 7 Days</div>
<svg class="a" style="left:1530px;top:720px" width="300" height="20">
  <path d="M5 10h27" stroke="#7b9bff" stroke-width="2"/><circle cx="18.5" cy="10" r="5.5" fill="#fff" stroke="#7b9bff" stroke-width="2"/>
  <path d="M153 10h27" stroke="#3ccbe2" stroke-width="2"/><circle cx="166.5" cy="10" r="5.5" fill="#fff" stroke="#3ccbe2" stroke-width="2"/>
</svg>
<div class="a" style="left:1568px;top:721px;font-size:14px;color:#555">Downlink Speed</div>
<div class="a" style="left:1716px;top:721px;font-size:14px;color:#555">Uplink Speed</div>
<div class="a" style="left:815px;top:737px;width:121px;height:20px;overflow:hidden"><div class="a" style="right:0;top:1px;font-size:13.6px;color:#6e7079">Average Speed(Mbps)</div></div>
<svg class="a" style="left:804px;top:755px" width="1040" height="200" id="chart"><text x="53" y="199.0" font-size="14" text-anchor="end" fill="#6e7079" font-family="Liberation Sans">0</text><path d="M62 160.3H981" stroke="#e0e6f1" stroke-width="1"/><text x="53" y="162.8" font-size="14" text-anchor="end" fill="#6e7079" font-family="Liberation Sans">0.2</text><path d="M62 124.1H981" stroke="#e0e6f1" stroke-width="1"/><text x="53" y="126.6" font-size="14" text-anchor="end" fill="#6e7079" font-family="Liberation Sans">0.4</text><path d="M62 87.9H981" stroke="#e0e6f1" stroke-width="1"/><text x="53" y="90.4" font-size="14" text-anchor="end" fill="#6e7079" font-family="Liberation Sans">0.6</text><path d="M62 51.7H981" stroke="#e0e6f1" stroke-width="1"/><text x="53" y="54.2" font-size="14" text-anchor="end" fill="#6e7079" font-family="Liberation Sans">0.8</text><path d="M62 15.5H981" stroke="#e0e6f1" stroke-width="1"/><text x="53" y="18.0" font-size="14" text-anchor="end" fill="#6e7079" font-family="Liberation Sans">1</text><path d="M62.2 196.5H980.7" stroke="#3bc4dc" stroke-width="1.6"/><circle cx="62.2" cy="196.5" r="2.6" fill="#fff" stroke="#3bc4dc" stroke-width="1.8"/><circle cx="132.9" cy="196.5" r="2.6" fill="#fff" stroke="#3bc4dc" stroke-width="1.8"/><circle cx="203.5" cy="196.5" r="2.6" fill="#fff" stroke="#3bc4dc" stroke-width="1.8"/><circle cx="274.2" cy="196.5" r="2.6" fill="#fff" stroke="#3bc4dc" stroke-width="1.8"/><circle cx="344.8" cy="196.5" r="2.6" fill="#fff" stroke="#3bc4dc" stroke-width="1.8"/><circle cx="415.5" cy="196.5" r="2.6" fill="#fff" stroke="#3bc4dc" stroke-width="1.8"/><circle cx="486.1" cy="196.5" r="2.6" fill="#fff" stroke="#3bc4dc" stroke-width="1.8"/><circle cx="556.8" cy="196.5" r="2.6" fill="#fff" stroke="#3bc4dc" stroke-width="1.8"/><circle cx="627.4" cy="196.5" r="2.6" fill="#fff" stroke="#3bc4dc" stroke-width="1.8"/><circle cx="698.1" cy="196.5" r="2.6" fill="#fff" stroke="#3bc4dc" stroke-width="1.8"/><circle cx="768.7" cy="196.5" r="2.6" fill="#fff" stroke="#3bc4dc" stroke-width="1.8"/><circle cx="839.4" cy="196.5" r="2.6" fill="#fff" stroke="#3bc4dc" stroke-width="1.8"/><circle cx="910.0" cy="196.5" r="2.6" fill="#fff" stroke="#3bc4dc" stroke-width="1.8"/><circle cx="980.7" cy="196.5" r="2.6" fill="#fff" stroke="#3bc4dc" stroke-width="1.8"/></svg>

<!-- floating toolbar -->
<div class="a" style="left:1828px;top:625px;width:52px;height:104px;background:#fff;border-radius:8px;box-shadow:0 1px 4px rgba(0,0,0,.12)"></div>
<svg class="a" style="left:1840px;top:631px" width="20" height="20" viewBox="0 0 20 20"><path d="M3.5 18.5l1-3.5A8 8 0 1 1 8 18z" fill="none" stroke="#333" stroke-width="1.6" stroke-linejoin="round"/><path d="M6.5 9a3.5 3.5 0 0 0 7 0" fill="none" stroke="#333" stroke-width="1.6"/></svg>
<svg class="a" style="left:1838px;top:664px" width="24" height="22" viewBox="1838 664 24 22"><path d="M1842.2 675.5L1846.8 667.6L1849.6 673" fill="none" stroke="#333" stroke-width="1.5" stroke-linejoin="round"/><path d="M1853.5 675.5c.5 3-2.5 5.3-6 5.3s-6.3-1.6-6.3-4.3c0-2.4 2.8-3.9 5.8-3.9 1.2 0 2.5.3 3.5.8" fill="none" stroke="#333" stroke-width="1.5"/><path d="M1843.8 678.2l4.6.6" stroke="#333" stroke-width="1.5"/><path d="M1851.5 677.5l6.5-6.8" stroke="#333" stroke-width="2.2" stroke-linecap="round"/><path d="M1851.2 678.2l2.3-3" stroke="#777" stroke-width="2"/></svg>
<svg class="a" style="left:1840px;top:700px" width="20" height="20" viewBox="0 0 20 20"><rect x="3.5" y="3" width="13" height="15.5" rx="1.5" fill="none" stroke="#333" stroke-width="1.6"/><rect x="7" y="1.5" width="6" height="3" rx="1" fill="#fff" stroke="#333" stroke-width="1.3"/><path d="M6.5 8h1M9 8h5M6.5 11h1M9 11h5M6.5 14h1M9 14h5" stroke="#333" stroke-width="1.3"/></svg>

</div></body></html>
